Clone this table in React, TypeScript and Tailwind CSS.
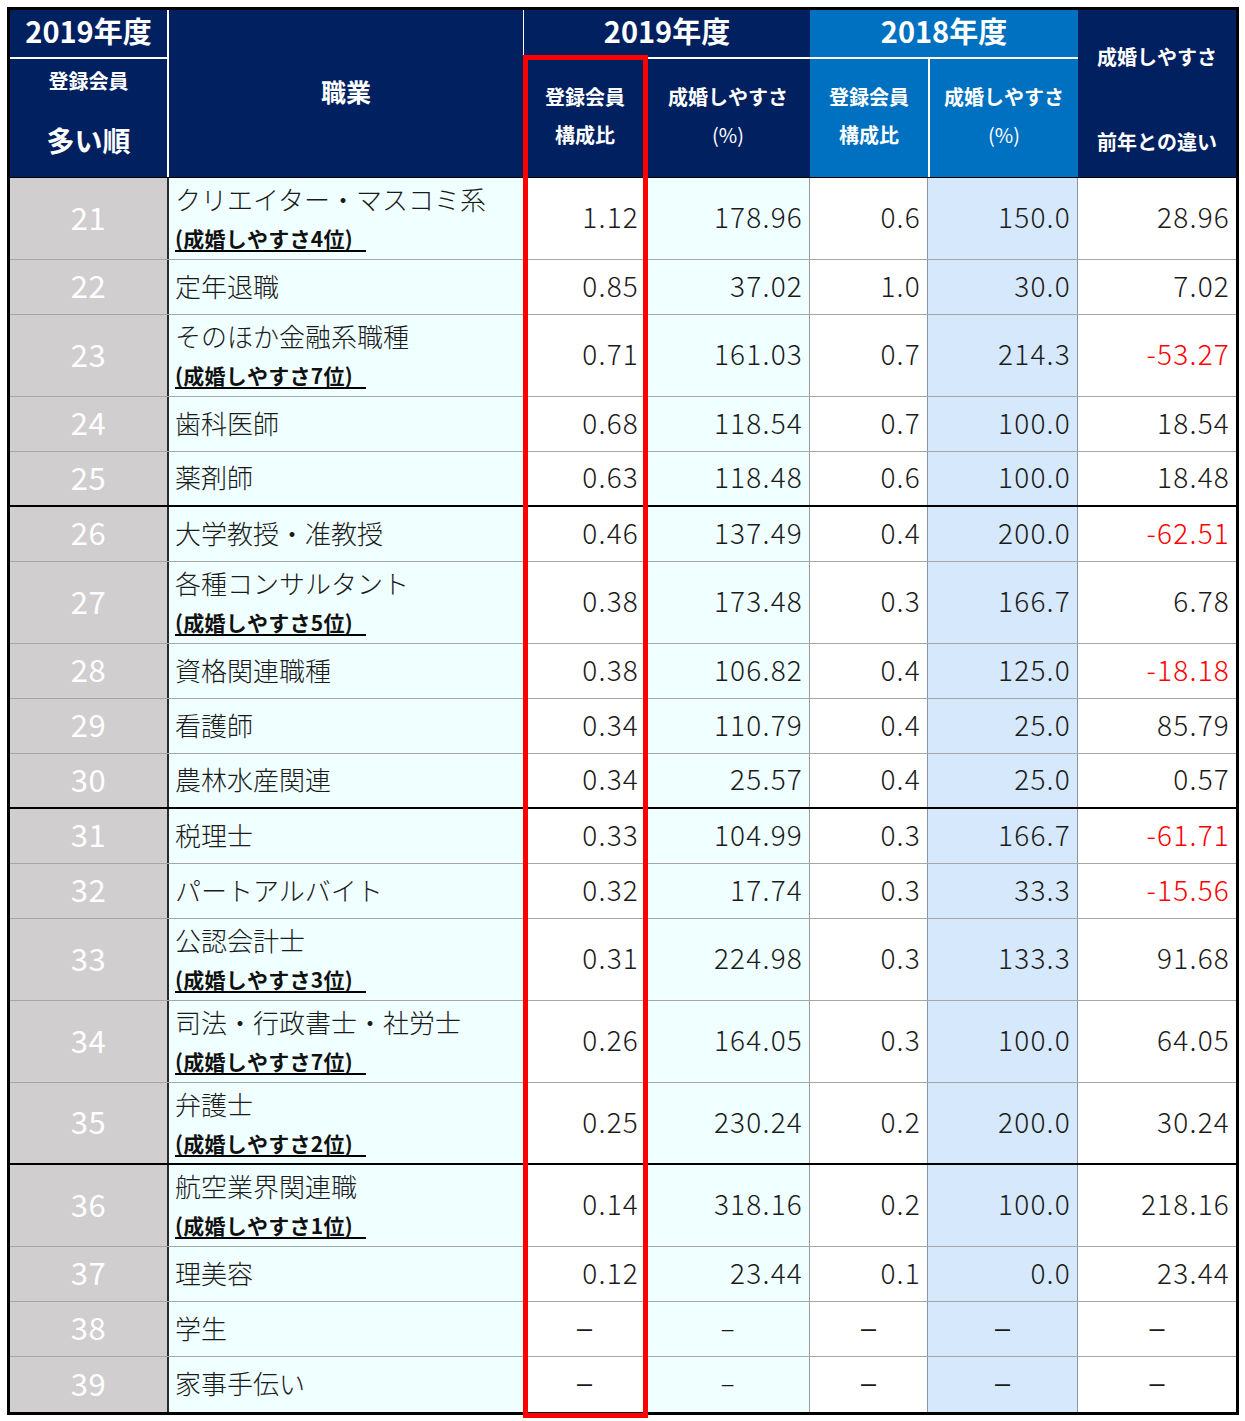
import React from "react";

type R = {
  r: number;
  name: string;
  sub?: string;
  v: string[];
};

const rows: R[] = [
  { r: 21, name: "クリエイター・マスコミ系", sub: "(成婚しやすさ4位)", v: ["1.12", "178.96", "0.6", "150.0", "28.96"] },
  { r: 22, name: "定年退職", v: ["0.85", "37.02", "1.0", "30.0", "7.02"] },
  { r: 23, name: "そのほか金融系職種", sub: "(成婚しやすさ7位)", v: ["0.71", "161.03", "0.7", "214.3", "-53.27"] },
  { r: 24, name: "歯科医師", v: ["0.68", "118.54", "0.7", "100.0", "18.54"] },
  { r: 25, name: "薬剤師", v: ["0.63", "118.48", "0.6", "100.0", "18.48"] },
  { r: 26, name: "大学教授・准教授", v: ["0.46", "137.49", "0.4", "200.0", "-62.51"] },
  { r: 27, name: "各種コンサルタント", sub: "(成婚しやすさ5位)", v: ["0.38", "173.48", "0.3", "166.7", "6.78"] },
  { r: 28, name: "資格関連職種", v: ["0.38", "106.82", "0.4", "125.0", "-18.18"] },
  { r: 29, name: "看護師", v: ["0.34", "110.79", "0.4", "25.0", "85.79"] },
  { r: 30, name: "農林水産関連", v: ["0.34", "25.57", "0.4", "25.0", "0.57"] },
  { r: 31, name: "税理士", v: ["0.33", "104.99", "0.3", "166.7", "-61.71"] },
  { r: 32, name: "パートアルバイト", v: ["0.32", "17.74", "0.3", "33.3", "-15.56"] },
  { r: 33, name: "公認会計士", sub: "(成婚しやすさ3位)", v: ["0.31", "224.98", "0.3", "133.3", "91.68"] },
  { r: 34, name: "司法・行政書士・社労士", sub: "(成婚しやすさ7位)", v: ["0.26", "164.05", "0.3", "100.0", "64.05"] },
  { r: 35, name: "弁護士", sub: "(成婚しやすさ2位)", v: ["0.25", "230.24", "0.2", "200.0", "30.24"] },
  { r: 36, name: "航空業界関連職", sub: "(成婚しやすさ1位)", v: ["0.14", "318.16", "0.2", "100.0", "218.16"] },
  { r: 37, name: "理美容", v: ["0.12", "23.44", "0.1", "0.0", "23.44"] },
  { r: 38, name: "学生", v: ["-", "-", "-", "-", "-"] },
  { r: 39, name: "家事手伝い", v: ["-", "-", "-", "-", "-"] },
];

const cellBg = ["bg-white", "bg-[#f0ffff]", "bg-white", "bg-[#d6e8fc]", "bg-white"];
const cellBorder = [
  "border-r border-[#9a9a9a]",
  "border-r border-[#9a9a9a]",
  "border-r border-[#8a96a4]",
  "border-r border-[#8a96a4]",
  "",
];

function NumCell({ value, i }: { value: string; i: number }) {
  const neg = value.startsWith("-") && value.length > 1;
  if (value === "-") {
    return (
      <div className={`flex items-center justify-center pb-[2px] ${cellBg[i]} ${cellBorder[i]}`}>
        <span
          className={`font-['Liberation_Sans',sans-serif] leading-none text-[#1a1a1a] ${
            i === 1 ? "text-[21px]" : "text-[27px]"
          }`}
        >
          –
        </span>
      </div>
    );
  }
  return (
    <div className={`flex items-center justify-end pr-[6px] pb-[5px] ${cellBg[i]} ${cellBorder[i]}`}>
      <span
        className={`text-[28px] font-light leading-none tracking-[1.2px] ${
          neg ? "text-[#ff0000]" : "text-[#1a1a1a]"
        }`}
      >
        {value}
      </span>
    </div>
  );
}

function Row({ d, last }: { d: R; last: boolean }) {
  const tall = !!d.sub;
  const thick = d.r === 25 || d.r === 30 || d.r === 35;
  const border = last ? "" : thick ? "border-b-2 border-black" : "border-b border-[#a6a6a6]";
  return (
    <div
      className={`grid grid-cols-[159px_355px_122px_164px_118px_150px_158px] ${
        tall ? "h-[82px]" : "h-[55px]"
      } ${border}`}
    >
      <div className="flex items-center justify-center pb-[5px] bg-[#d0cece] border-r-2 border-[#2a2a2a]">
        <span className="text-[31px] font-normal leading-none tracking-[0.5px] text-white">{d.r}</span>
      </div>
      {tall ? (
        <div className="flex flex-col bg-[#f0ffff] border-r border-[#9a9a9a] pl-[6px] pt-[6px]">
          <div className="text-[26px] font-light leading-[30px] text-[#1a1a1a] whitespace-nowrap">{d.name}</div>
          <div className="mt-[12px]">
            <span className="inline-block w-[191px] border-b-2 border-black text-[21px] font-bold leading-[24px] tracking-[0.3px] text-[#111] whitespace-nowrap">
              {d.sub}
            </span>
          </div>
        </div>
      ) : (
        <div className="flex items-center bg-[#f0ffff] border-r border-[#9a9a9a] pl-[6px] pb-[3px]">
          <span className="text-[26px] font-light leading-[30px] text-[#1a1a1a] whitespace-nowrap">{d.name}</span>
        </div>
      )}
      {d.v.map((v, i) => (
        <NumCell key={i} value={v} i={i} />
      ))}
    </div>
  );
}

function Header() {
  return (
    <div className="grid grid-cols-[159px_355px_122px_164px_118px_150px_158px] grid-rows-[49px_118px] border-b border-black text-white font-bold">
      <div className="col-start-1 row-start-1 flex items-center justify-center bg-[#002060] border-b-2 border-r-2 border-white pb-[6px]">
        <span className="text-[29px] leading-none">2019年度</span>
      </div>
      <div className="col-start-1 row-start-2 flex flex-col items-center bg-[#002060] border-r-2 border-white pt-[9px]">
        <span className="text-[20px] leading-[26px]">登録会員</span>
        <span className="mt-[28px] text-[28px] leading-[36px]">多い順</span>
      </div>
      <div className="col-start-2 row-start-1 row-span-2 flex items-center justify-center bg-[#002060] border-r border-white pb-[4px]">
        <span className="text-[25px] leading-none">職業</span>
      </div>
      <div className="col-start-3 col-span-2 row-start-1 flex items-center justify-center bg-[#002060] border-b-2 border-white pb-[6px]">
        <span className="text-[29px] leading-none">2019年度</span>
      </div>
      <div className="col-start-5 col-span-2 row-start-1 flex items-center justify-center bg-[#0070c0] border-b-2 border-white pb-[6px]">
        <span className="text-[29px] leading-none">2018年度</span>
      </div>
      <div className="col-start-7 row-start-1 row-span-2 flex flex-col items-center bg-[#002060] pt-[33px]">
        <span className="text-[20px] leading-[28px]">成婚しやすさ</span>
        <span className="mt-[57px] text-[20px] leading-[28px]">前年との違い</span>
      </div>
      <div className="col-start-3 row-start-2 flex flex-col items-center bg-[#002060] pt-[24px]">
        <span className="text-[20px] leading-[28px]">登録会員</span>
        <span className="mt-[10px] text-[20px] leading-[28px]">構成比</span>
      </div>
      <div className="relative col-start-4 row-start-2 flex flex-col items-center bg-[#002060] pt-[24px]">
        <div className="absolute left-0 top-[48px] bottom-0 w-[2px] bg-white" />
        <span className="text-[20px] leading-[28px]">成婚しやすさ</span>
        <span className="mt-[10px] text-[20px] leading-[28px] font-normal">(%)</span>
      </div>
      <div className="col-start-5 row-start-2 flex flex-col items-center bg-[#0070c0] pt-[24px]">
        <span className="text-[20px] leading-[28px]">登録会員</span>
        <span className="mt-[10px] text-[20px] leading-[28px]">構成比</span>
      </div>
      <div className="col-start-6 row-start-2 flex flex-col items-center bg-[#0070c0] border-l-2 border-white pt-[24px]">
        <span className="text-[20px] leading-[28px]">成婚しやすさ</span>
        <span className="mt-[10px] text-[20px] leading-[28px] font-normal">(%)</span>
      </div>
    </div>
  );
}

export default function App() {
  return (
    <div className="w-[1245px] min-h-[1421px] bg-white pt-[7px] pl-[7px] font-['Noto_Sans_CJK_JP','Noto_Sans',sans-serif]">
      <div className="relative w-[1232px] border-[3px] border-black">
        <Header />
        {rows.map((d, idx) => (
          <Row key={d.r} d={d} last={idx === rows.length - 1} />
        ))}
        <div className="absolute left-[513px] top-[45px] w-[125px] h-[1363px] border-[5px] border-[#ff0000] pointer-events-none" />
      </div>
    </div>
  );
}
